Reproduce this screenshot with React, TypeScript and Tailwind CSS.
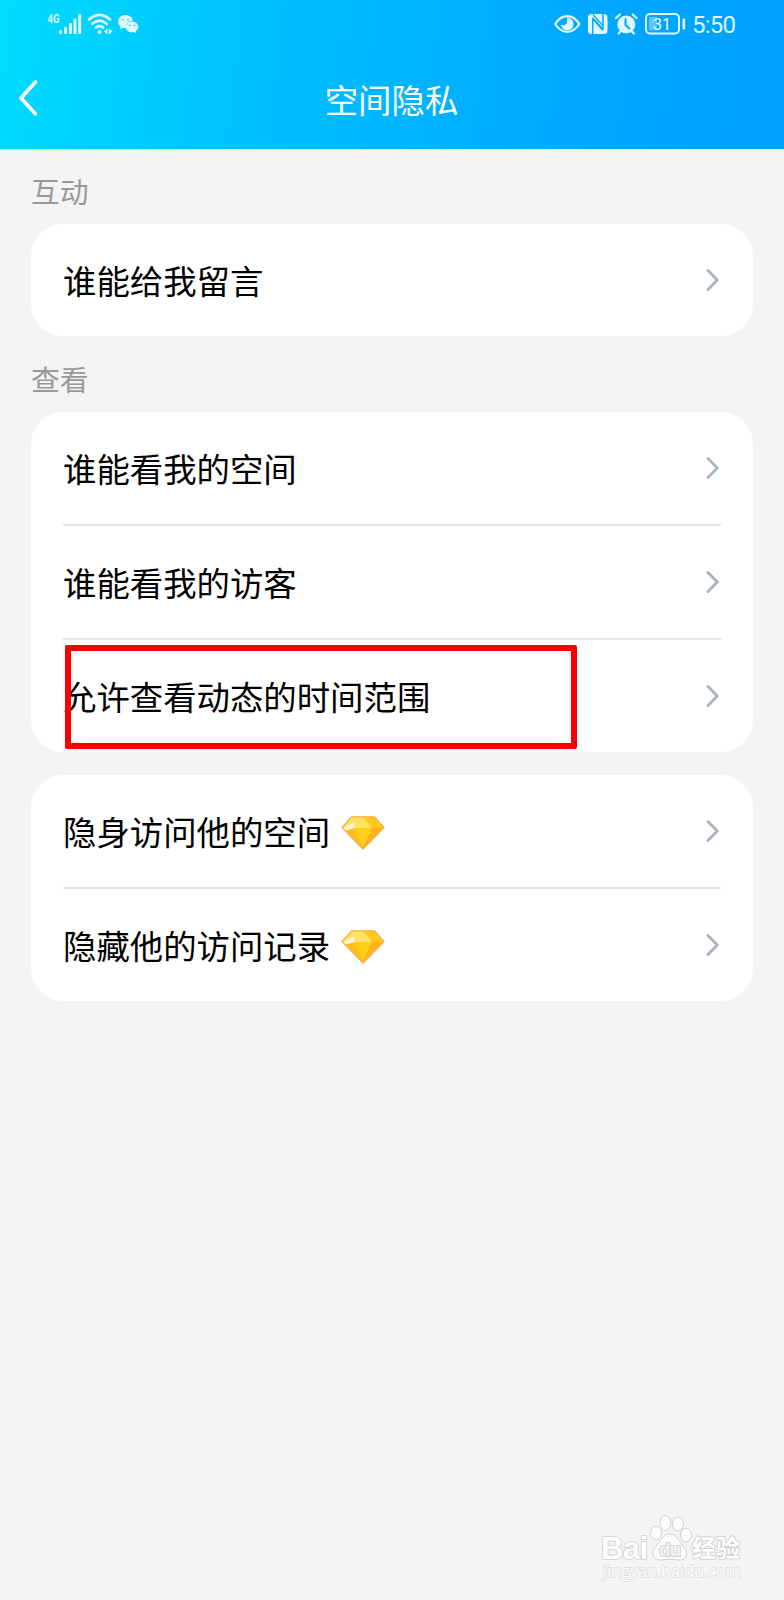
import type { ReactNode } from 'react'

interface Item {
  label: string
  gem?: boolean
  marked?: boolean
}

const INTERACT: Item[] = [{ label: '谁能给我留言' }]

const VIEW: Item[] = [
  { label: '谁能看我的空间' },
  { label: '谁能看我的访客' },
  { label: '允许查看动态的时间范围', marked: true },
]

const VIP: Item[] = [
  { label: '隐身访问他的空间', gem: true },
  { label: '隐藏他的访问记录', gem: true },
]

function Gem() {
  return (
    <svg viewBox="0 0 44 34" className="w-[44px] h-[34px] ml-[11px] mt-[3px] shrink-0">
      <defs>
        <linearGradient id="gem" x1="0" y1="0" x2="0" y2="1">
          <stop offset="0" stopColor="#ffd91c" />
          <stop offset="1" stopColor="#ffab10" />
        </linearGradient>
      </defs>
      <path d="M10.500 .8h23L43 11.500 22 33 1 11.500Z" fill="url(#gem)" stroke="#f7a94e" strokeWidth="1.200" strokeLinejoin="round" />
      <path d="M11 1.500h11L13 12H2Z" fill="#ffe168" />
      <path d="M22 1.500h11L42 12H31Z" fill="#ffc91c" />
      <path d="M22 1.500 31 12H13Z" fill="#ffe362" />
      <path d="M2.500 12h10.500L22 32Z" fill="#ffbe1a" />
      <path d="M13 12h18l-9 20Z" fill="#ffcf1a" />
      <path d="M31 12h10.500L22 32Z" fill="#ffb41a" />
      <path d="M2 12 12.500 6.500 14 12 5 14.500Z" fill="#fff6d2" />
    </svg>
  )
}

function Chevron() {
  return (
    <svg viewBox="0 0 14 24" className="w-[14px] h-[24px] shrink-0" fill="none" stroke="#abb7be" strokeWidth="3" strokeLinecap="round" strokeLinejoin="round">
      <path d="M2 2.500 11.300 12 2 21.500" />
    </svg>
  )
}

function Row({ item, last }: { item: Item; last: boolean }) {
  return (
    <div className={`relative flex-1 flex items-center ${last ? '' : 'border-b-2 border-[#e4e5e7]'}`}>
      <span className="text-[33.400px] leading-[48px] -mt-px text-black whitespace-nowrap">{item.label}</span>
      {item.gem && <Gem />}
      <div className="ml-auto mr-px">
        <Chevron />
      </div>
      {item.marked && <div className="absolute left-[2px] top-[5px] w-[512px] h-[104px] border-6 border-[#fb0000] rounded-[2px]" />}
    </div>
  )
}

function Card({ items, className }: { items: Item[]; className: string }) {
  return (
    <div className={`mx-[31px] px-8 flex flex-col bg-white rounded-[32px] ${className}`}>
      {items.map((item, i) => <Row key={item.label} item={item} last={i === items.length - 1} />)}
    </div>
  )
}

function SectionTitle({ children, className }: { children: ReactNode; className: string }) {
  return <h2 className={`pl-[31px] text-[28.800px] leading-[40px] text-[#999] ${className}`}>{children}</h2>
}

function StatusBar() {
  return (
    <div className="h-12 flex items-center pl-[47px] pr-[47px] text-[#dff7ff]">
      {/* Signal, wifi, wechat */}
      <svg viewBox="0 0 92 24" className="w-[92px] h-6" fill="currentColor">
        <text x="0.500" y="11" fontSize="12" fontWeight="700" textLength="12" lengthAdjust="spacingAndGlyphs" fontFamily="Roboto, sans-serif">4G</text>
        <rect x="12" y="18" width="3" height="4" rx="1" />
        <rect x="17" y="15" width="3" height="7" rx="1" />
        <rect x="22" y="11" width="3" height="11" rx="1" />
        <rect x="26.500" y="6.500" width="3" height="15.500" rx="1" />
        <rect x="31.200" y="2" width="3" height="20" rx="1" />
        <g fill="none" stroke="currentColor" strokeWidth="2.600" strokeLinecap="round">
          <path d="M42 7.500q10.500-9.200 21 0" />
          <path d="M45.300 11.800q7.200-6.300 14.400 0" />
          <path d="M48.800 15.600q3.700-3 7.400 0" />
        </g>
        <circle cx="52.500" cy="20" r="2" />
        <path d="m60.500 16.500-3.500 3 3.500 3Zm1.500 0 3.500 3-3.500 3Z" />
        <path d="M78.500 3C74.300 3 71 5.900 71 9.600c0 2.100 1.100 3.900 2.700 5.100l-.6 2.600 2.900-1.500 3 .4c-.7-5 3-7.700 7-7.500C85.300 5.200 82.200 3 78.500 3Z" />
        <path d="M85 9.500c-3.700 0-6.200 2.400-6.200 5.400s2.700 5.300 6.200 5.300c.7 0 1.400-.1 2-.3l2.300 1.300-.4-2.200c1.500-1 2.400-2.400 2.400-4.100 0-3-2.800-5.400-6.300-5.400Z" />
        <g fill="#00cdff">
          <circle cx="76" cy="7.800" r=".9" />
          <circle cx="81" cy="7.800" r=".9" />
          <circle cx="83" cy="13.500" r=".8" />
          <circle cx="87.500" cy="13.500" r=".8" />
        </g>
      </svg>
      {/* Eye, nfc, alarm, battery */}
      <svg viewBox="0 0 132 24" className="w-[132px] h-6 ml-auto" fill="none" stroke="currentColor">
        <path d="M1.200 12C8 1.500 18.500 1.500 25.300 12 18.500 22.500 8 22.500 1.200 12Z" strokeWidth="2.200" strokeLinejoin="round" />
        <path d="M13.300 5.800a6.300 6.300 0 1 1-6.300 6.800c2 1 4.500.6 5.600-1.200 1-1.700 0-3.800.7-5.600Z" fill="currentColor" stroke="none" />
        <rect x="34" y="2" width="19.500" height="20" rx="3.500" fill="currentColor" stroke="none" />
        <path d="M38.700 22V6.500L48.500 18M49 2v15.500L39 6" stroke="#00a9ff" strokeWidth="1.500" strokeLinejoin="round" />
        <path d="M39 2.500 48.700 13.500" stroke="#00a9ff" strokeWidth="1.200" />
        <circle cx="72.300" cy="12.500" r="9" fill="currentColor" stroke="none" />
        <path d="M62 6 65.800 2.600M78.800 2.600l3.800 3.400M66.500 19.500l-1.800 2M78 19.500l1.800 2" strokeWidth="2.200" strokeLinecap="round" />
        <path d="M71.500 7v6l4 3.500" stroke="#00a9ff" strokeWidth="2" strokeLinecap="round" />
        <rect x="92" y="2" width="33" height="19.500" rx="4" strokeWidth="2" />
        <rect x="95" y="5" width="8" height="13.500" rx="1" fill="currentColor" stroke="none" opacity=".4" />
        <rect x="128.500" y="6.500" width="2.600" height="11" rx="1" fill="currentColor" stroke="none" />
        <text x="99" y="18" fontSize="17" textLength="18" lengthAdjust="spacingAndGlyphs" fill="#effbff" stroke="none" fontFamily="Roboto, sans-serif">31</text>
      </svg>
      <span className="ml-[6px] w-[45px] pt-[2px] font-[Roboto] text-[24px] leading-6 tracking-[-0.800px] whitespace-nowrap">5:50</span>
    </div>
  )
}

export default function App() {
  return (
    <div className="w-[784px] h-[1600px] flex flex-col bg-[#f4f4f4] font-['Noto_Sans_CJK_SC',sans-serif] overflow-hidden">
      <header className="h-[149px] shrink-0 bg-[linear-gradient(97deg,#00dcff_0%,#00c4ff_28%,#00b0ff_58%,#00a3ff_85%,#00a2ff_100%)]">
        <StatusBar />
        <div className="h-[101px] grid grid-cols-[1fr_auto_1fr] items-center">
          <svg viewBox="0 0 20 36" className="w-5 h-9 ml-[18px] -mt-[1px]" fill="none" stroke="#fff" strokeWidth="3.600" strokeLinecap="round" strokeLinejoin="round">
            <path d="M17.500 2 3 18l14.500 16" />
          </svg>
          <h1 className="text-[33.400px] leading-[48px] text-white -ml-px">空间隐私</h1>
        </div>
      </header>

      <SectionTitle className="pt-[22px]">互动</SectionTitle>
      <Card items={INTERACT} className="mt-[13px] h-[112px] shrink-0" />
      <SectionTitle className="pt-[23px]">查看</SectionTitle>
      <Card items={VIEW} className="mt-[13px] h-[340px] shrink-0" />
      <Card items={VIP} className="mt-[23px] h-[226px] shrink-0" />

      {/* Watermark */}
      <footer className="mt-auto h-[88px] pl-[599px]">
        <svg viewBox="0 0 150 70" className="w-[150px] h-[70px]" fill="#fdfdfd" stroke="#cfcfcf" strokeWidth="1.600" fontFamily="'Liberation Sans', sans-serif">
          <text x="2" y="47" fontSize="31" fontWeight="700" textLength="47" paintOrder="stroke">Bai</text>
          <g strokeWidth="1">
            <ellipse cx="57" cy="21" rx="5.500" ry="6.800" />
            <ellipse cx="66.500" cy="11" rx="5.500" ry="7.500" />
            <ellipse cx="79" cy="12" rx="5.500" ry="7" />
            <ellipse cx="87" cy="23" rx="5.500" ry="6.800" />
            <path d="M71 22c7 0 9 8 13 12 7 7 3 15-5 14-5-1-11-1-16 0-9 1-12-7-6-14 4-4 7-12 14-12Z" />
          </g>
          <text x="60" y="44" fontSize="19" fill="#f4f4f4" strokeWidth="1.800" fontWeight="700" textLength="22" paintOrder="stroke">du</text>
          <text x="93" y="45" fontSize="24" fontWeight="700" textLength="48" fontFamily="'Noto Sans CJK SC', sans-serif" paintOrder="stroke">经验</text>
          <text x="4" y="65" fontSize="16.500" stroke="#dadada" strokeWidth="1.300" textLength="138" fontFamily="'Open Sans', sans-serif" paintOrder="stroke">jingyan.baidu.com</text>
        </svg>
      </footer>
    </div>
  )
}
